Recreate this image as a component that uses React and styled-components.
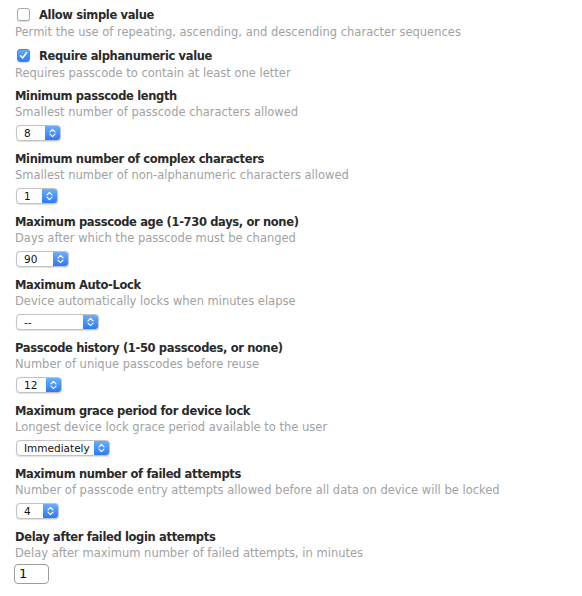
import * as React from "react"
import styled, { createGlobalStyle } from "styled-components"

const GlobalStyle = createGlobalStyle`
  body {
    margin: 0;
    background: #fff;
    font-family: "DejaVu Sans", "Liberation Sans", sans-serif;
    -webkit-font-smoothing: antialiased;
  }
`

const Page = styled.div`
  padding: 6px 15px 0;
  display: flex;
  flex-direction: column;
`

const CheckOption = styled.div`
  display: flex;
  flex-direction: column;
  margin-bottom: 7px;
`

const CheckRow = styled.label`
  display: flex;
  align-items: center;
  gap: 9px;
  height: 17px;
  padding-left: 2px;
  margin-bottom: 1px;

  span {
    margin-top: -1px;
  }
`

const Box = styled.span`
  width: 13px;
  height: 13px;
  box-sizing: border-box;
  border-radius: 3px;
  display: flex;
  align-items: center;
  justify-content: center;
  border: 1px solid ${(p) => (p.checked ? "#3a86f7" : "#a9a9a9")};
  background: ${(p) =>
    p.checked ? "linear-gradient(#68acfa, #2f7cf6)" : "#fff"};
  box-shadow: 0 0.5px 1px rgba(0, 0, 0, 0.15);
`

const Title = styled.div`
  font-size: 11.5px;
  line-height: 16px;
  font-weight: bold;
  color: #2a2a2a;
  letter-spacing: -0.35px;
`

const Desc = styled.div`
  font-size: 11.5px;
  line-height: 16px;
  color: #a2a2a2;
`

const Field = styled.div`
  display: flex;
  flex-direction: column;
  margin-bottom: 10px;
`

const Select = styled.div`
  margin-top: 5px;
  margin-left: 1px;
  width: ${(p) => p.$w}px;
  height: 16px;
  box-sizing: border-box;
  display: flex;
  border: 1px solid #c3c3c3;
  border-radius: 4px;
  background: #fff;
  box-shadow: 0 0.5px 1px rgba(0, 0, 0, 0.12);
  overflow: hidden;
`

const SelectValue = styled.span`
  flex: 1;
  font-size: 10.5px;
  line-height: 14px;
  padding-left: 7px;
  color: #111;
  white-space: nowrap;
`

const Stepper = styled.span`
  width: 15px;
  flex: none;
  display: flex;
  align-items: center;
  justify-content: center;
  background: linear-gradient(#6aaefa, #2c7af5);
`

const TextInput = styled.div`
  margin-top: 3px;
  margin-left: -1px;
  width: 35px;
  height: 20px;
  box-sizing: border-box;
  border: 1px solid #9d9d9d;
  border-radius: 4px;
  font-size: 13px;
  line-height: 18px;
  padding-left: 4px;
  color: #111;
`

const Check = () => (
  <svg width="9" height="9" viewBox="0 0 9 9">
    <path d="M1.5 4.8 L3.6 7 L7.6 1.6" fill="none" stroke="#fff" strokeWidth="1.5" strokeLinecap="round" strokeLinejoin="round" />
  </svg>
)

const Chevrons = () => (
  <svg width="7" height="10" viewBox="0 0 7 10">
    <path d="M1 3.8 L3.5 1.3 L6 3.8 M1 6.2 L3.5 8.7 L6 6.2" fill="none" stroke="#fff" strokeWidth="1.2" strokeLinecap="round" strokeLinejoin="round" />
  </svg>
)

const checks = [
  {
    label: "Allow simple value",
    desc: "Permit the use of repeating, ascending, and descending character sequences",
    checked: false,
  },
  {
    label: "Require alphanumeric value",
    desc: "Requires passcode to contain at least one letter",
    checked: true,
  },
]

const fields = [
  { title: "Minimum passcode length", desc: "Smallest number of passcode characters allowed", value: "8", w: 45 },
  { title: "Minimum number of complex characters", desc: "Smallest number of non-alphanumeric characters allowed", value: "1", w: 42 },
  { title: "Maximum passcode age (1-730 days, or none)", desc: "Days after which the passcode must be changed", value: "90", w: 53 },
  { title: "Maximum Auto-Lock", desc: "Device automatically locks when minutes elapse", value: "--", w: 83 },
  { title: "Passcode history (1-50 passcodes, or none)", desc: "Number of unique passcodes before reuse", value: "12", w: 46 },
  { title: "Maximum grace period for device lock", desc: "Longest device lock grace period available to the user", value: "Immediately", w: 94 },
  { title: "Maximum number of failed attempts", desc: "Number of passcode entry attempts allowed before all data on device will be locked", value: "4", w: 43 },
]

const App = () => (
  <>
    <GlobalStyle />
    <Page>
      {checks.map((c) => (
        <CheckOption key={c.label}>
          <CheckRow>
            <Box checked={c.checked}>{c.checked && <Check />}</Box>
            <Title>{c.label}</Title>
          </CheckRow>
          <Desc>{c.desc}</Desc>
        </CheckOption>
      ))}
      {fields.map((f) => (
        <Field key={f.title}>
          <Title>{f.title}</Title>
          <Desc>{f.desc}</Desc>
          <Select $w={f.w}>
            <SelectValue>{f.value}</SelectValue>
            <Stepper>
              <Chevrons />
            </Stepper>
          </Select>
        </Field>
      ))}
      <Field>
        <Title>Delay after failed login attempts</Title>
        <Desc>Delay after maximum number of failed attempts, in minutes</Desc>
        <TextInput>1</TextInput>
      </Field>
    </Page>
  </>
)

export default App
